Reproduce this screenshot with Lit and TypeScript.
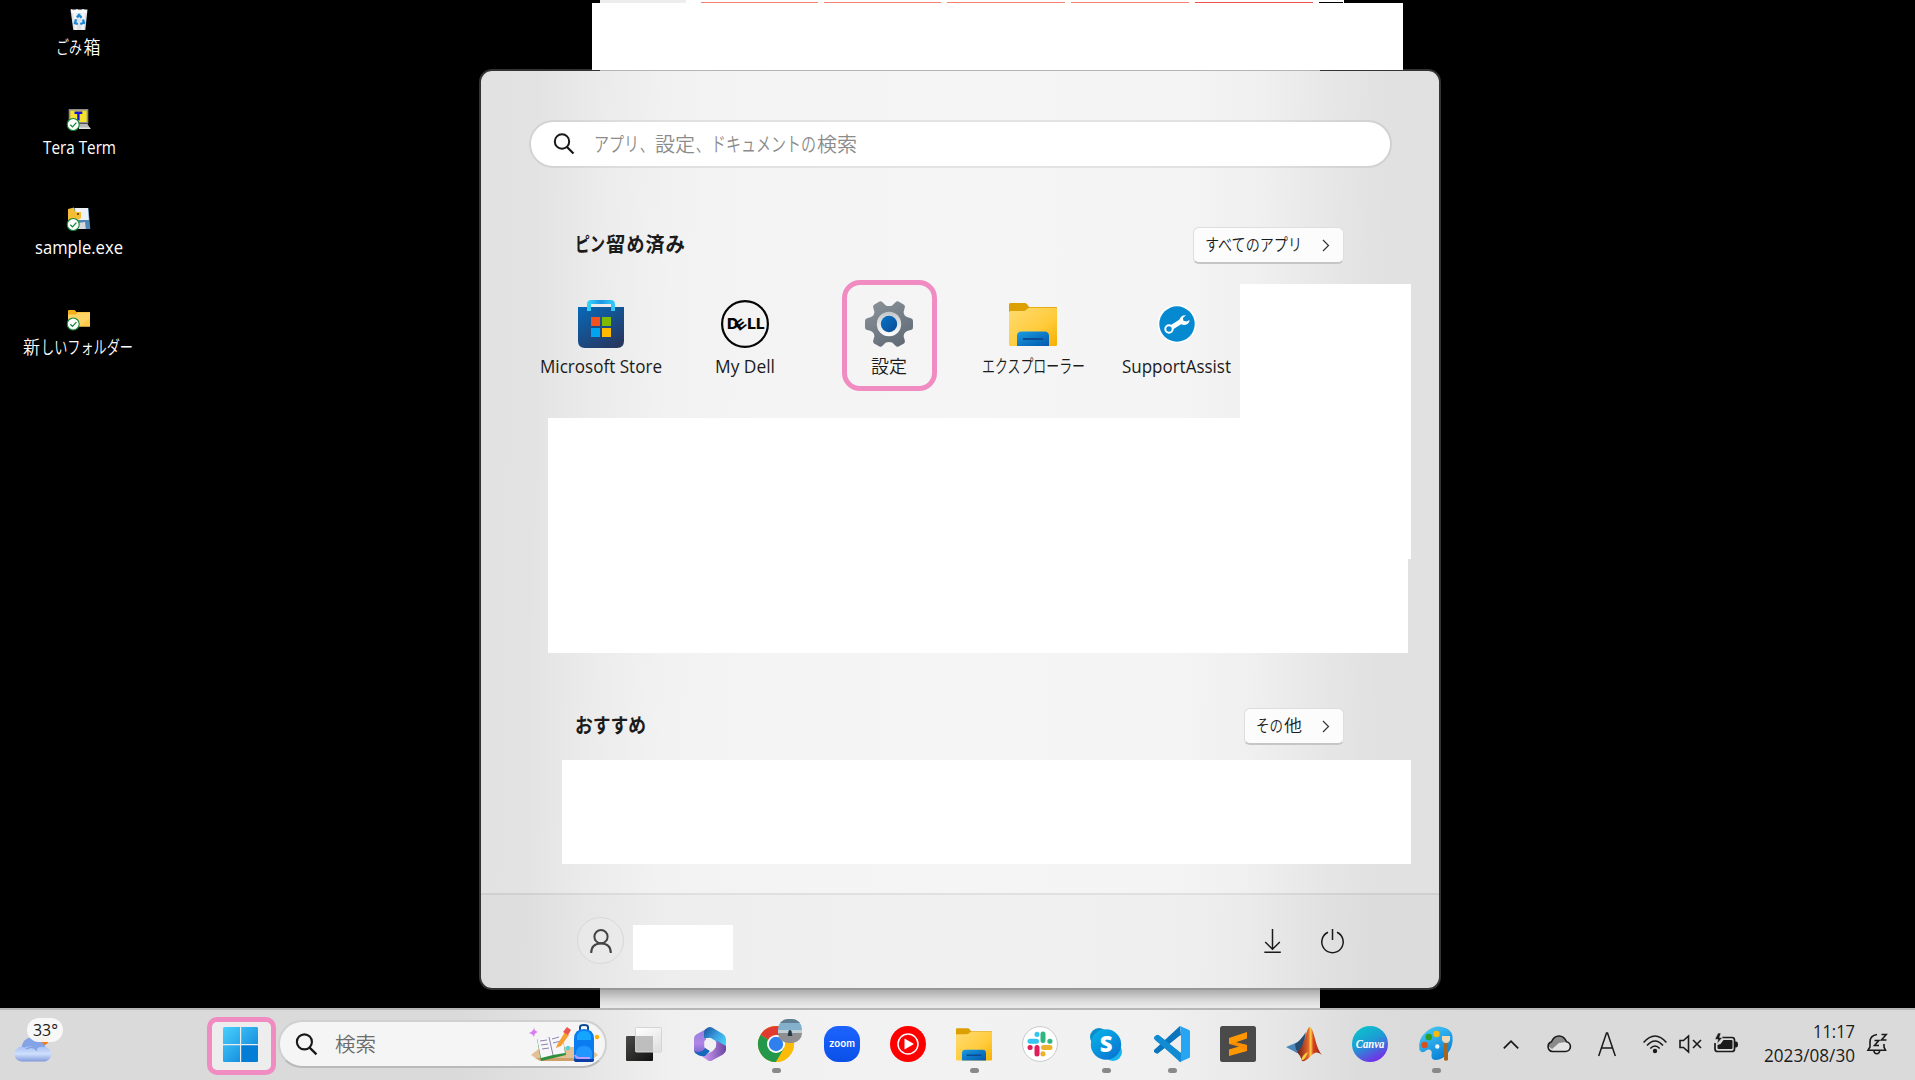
import { LitElement, html, css, svg } from "lit";
import { customElement } from "lit/decorators.js";

type Run = [string, number, number];
const JP = `"Noto Sans CJK JP", sans-serif`;
const UI = `"Open Sans", "Noto Sans", "Noto Sans CJK JP", sans-serif`;

interface LabelOptions {
  w: number;
  h?: number;
  base?: number;
  size?: number;
  fill?: string;
  weight?: number;
  font?: string;
}

/* A line of text whose runs each have a start and an advance width. */
const label = (runs: Run[], o: LabelOptions) => html`
  <svg class="label" width=${o.w} height=${o.h ?? 24} font-size=${o.size ?? 18}
    font-weight=${o.weight ?? (o.font === JP ? 350 : 400)}
    font-family=${o.font ?? UI} fill=${o.fill ?? "#1b1b1b"}>
    ${runs.map(([t, x, w]) => svg`<text x=${x} y=${o.base ?? 18} textLength=${w} lengthAdjust="spacingAndGlyphs">${t}</text>`)}
  </svg>`;

const icon = (w: number, h: number, body: unknown, box = `0 0 ${w} ${h}`) =>
  html`<svg class="icon" width=${w} height=${h} viewBox=${box}>${body}</svg>`;

const synced = (cy: number) => svg`
  <g transform=${`translate(0 ${cy - 16})`}>
    <circle cx="6.200" cy="16" r="6" fill="#fff" stroke="#16853a" stroke-width="1.100"/>
    <path d="M3.300 16.200l2.200 2.200 3.900-4.300" fill="none" stroke="#16853a" stroke-width="1.300"/>
  </g>`;

const recycle = icon(20, 24, svg`
  <path d="M1.500 2.500h17L16.300 23H4.300z" fill="#dfe3e8"/>
  <path d="M2 2l3 2 3-2 3 2 3-2 4 2-.6 2H2.500z" fill="#f8fafc"/>
  <path d="M4 5l2 18h2L7 5zM13 5l-.5 18h2L16 5z" fill="#f3f5f7"/>
  <g fill="none" stroke="#1587d8" stroke-width="2.300">
    <path d="M8 10.500l2-2.500 2.600 2.800"/><path d="M14 12.500l1 3.300-3.700 1.200"/><path d="M8.800 17l-2.800-.8 1-4"/>
  </g>`);

const teraTerm = icon(24, 24, svg`
  <rect x="2.500" y="2.800" width="18" height="13" fill="#f6e22b" stroke="#8d8d8d" stroke-width="1.600"/>
  <path d="M7.500 5.800h7.800M11.400 5.600v8" stroke="#1414d8" stroke-width="2.400"/>
  <path d="M12 17h8.500l3 5H12z" fill="#b9b9b9"/><path d="M12 20.500h11l.6 1.500H12z" fill="#e1e1e1"/>
  ${synced(17.5)}`);

const sampleExe = icon(24, 24, svg`
  <path d="M6 1h15.500l1.800 21H9z" fill="#4b87b8"/>
  <path d="M8 1h13l.9 12H9z" fill="#eef1f5"/><path d="M11 16l7-1 .8 7H11z" fill="#d9d9d9"/>
  <path d="M1 2l6-1.500L8 5h6v6L8 15H1z" fill="#f4bd35"/><circle cx="11" cy="7" r="1.100" fill="#5b3d0a"/>
  ${synced(17.5)}`);

const plainFolder = icon(24, 24, svg`
  <path d="M1 4a1 1 0 0 1 1-1h5.500l2 2H23v5H1z" fill="#f3b01c"/>
  <path d="M1 7.500h8l2-2h12V19.500H1z" fill="#fdd465"/><path d="M12 19.500L23 11v8.500z" fill="#fccb48"/>
  ${synced(17)}`);

const folder = (id: string) => svg`
  <defs>
    <linearGradient id=${id + "a"} x2="1" y2="1"><stop offset="0" stop-color="#ffdb72"/><stop offset=".6" stop-color="#ffcb3a"/><stop offset="1" stop-color="#f5b000"/></linearGradient>
    <linearGradient id=${id + "b"} x2="1" y2="1"><stop offset="0" stop-color="#1b9be0"/><stop offset="1" stop-color="#0258ad"/></linearGradient>
  </defs>
  <path d="M0 4.500a1.500 1.500 0 0 1 1.500-1.500H16c2.500 0 3 4 5 4h26a1 1 0 0 1 1 1V12H0z" fill="#dda003"/>
  <path d="M0 12.500Q0 11 1.500 11H14c4 0 4-3.200 7-3.200h26q1 0 1 1.500v35.200q0 1.500-1.500 1.500h-45Q0 46 0 44.500z" fill=${`url(#${id}a)`}/>
  <path d="M8 46V36q0-4.500 4.500-4.500h23q4.500 0 4.500 4.500v10z" fill=${`url(#${id}b)`}/>
  <path d="M14 39h20" stroke="#0b4a91" stroke-width="2"/>`;

const store = icon(48, 50, svg`
  <defs>
    <linearGradient id="st" x1=".1" x2=".8" y2="1"><stop offset="0" stop-color="#0867b5"/><stop offset="1" stop-color="#27365f"/></linearGradient>
    <linearGradient id="sh" x2="1"><stop offset="0" stop-color="#32d1f7"/><stop offset=".5" stop-color="#1d97e8"/><stop offset="1" stop-color="#32c8f7"/></linearGradient>
  </defs>
  <path d="M1 7h46v34q0 7-7 7H8q-7 0-7-7z" fill="url(#st)"/>
  <path d="M12 11V4.500Q12 2 14 2h20q2 0 2 2.500V11" fill="none" stroke="url(#sh)" stroke-width="4"/>
  <path d="M14 17h9v9h-9z" fill="#f4511e"/><path d="M25 17h9v9h-9z" fill="#7fba00"/>
  <path d="M14 28h9v9h-9z" fill="#00a4ef"/><path d="M25 28h9v9h-9z" fill="#ffb900"/>`);

const dell = icon(48, 48, svg`
  <circle cx="24" cy="24" r="22.900" fill="none" stroke="#050505" stroke-width="2.200"/>
  <g font-family="Inter, sans-serif" font-weight="800" font-size="14.500" fill="#050505">
    <text x="6" y="29.300" textLength="11.500" lengthAdjust="spacingAndGlyphs">D</text>
    <text transform="translate(18.200 31.200) rotate(-38)" x="0" y="0" font-size="12.500" textLength="10.500" lengthAdjust="spacingAndGlyphs">E</text>
    <text x="26.300" y="29.300" textLength="17.500" lengthAdjust="spacingAndGlyphs">LL</text>
  </g>`);

const gear = icon(48, 48, svg`
  <defs>
    <linearGradient id="ge" x2=".6" y2="1"><stop offset="0" stop-color="#8d949b"/><stop offset="1" stop-color="#626d78"/></linearGradient>
    <linearGradient id="gr" x2="0" y2="1"><stop offset="0" stop-color="#c4c7ca"/><stop offset="1" stop-color="#fff"/></linearGradient>
    <linearGradient id="gb" x2="1" y2="1"><stop offset="0" stop-color="#0574c9"/><stop offset="1" stop-color="#0c4a94"/></linearGradient>
  </defs>
  <path d="M14.500 1.500q1.500-.8 3 .7l3.300 3.200q3.200 1.400 6.400 0l3.300-3.200q1.500-1.500 3-.7l5.500 3.200q1.400 1 .8 2.800l-1.200 4.400q.3 3.700 3.500 5.200l4.400 1.300q1.500.5 1.500 2.500v6.300q0 2-1.500 2.500l-4.400 1.300q-3.200 1.500-3.500 5.200l1.200 4.400q.6 1.800-.8 2.800l-5.500 3.100q-1.500.8-3-.7l-3.300-3.200q-3.200-1.400-6.400 0l-3.300 3.200q-1.500 1.500-3 .7L9 43.400q-1.400-1-.8-2.800l1.200-4.400q-.3-3.700-3.500-5.200L1.500 29.700Q0 29.200 0 27.200v-6.300q0-2 1.500-2.500l4.400-1.300q3.200-1.500 3.500-5.200L8.200 7.500Q7.600 5.700 9 4.700z" fill="url(#ge)"/>
  <circle cx="24" cy="24" r="12.200" fill="url(#gr)"/><circle cx="24" cy="24" r="8.200" fill="url(#gb)"/>`);

const support = icon(48, 48, svg`
  <circle cx="24" cy="24" r="19.300" fill="#fff"/><circle cx="24" cy="24" r="17.700" fill="#0589d1"/>
  <path d="M18.500 27.500l11-7" stroke="#fff" stroke-width="5"/>
  <circle cx="16" cy="29" r="3.700" fill="#0589d1" stroke="#fff" stroke-width="2"/>
  <path d="M33 15.200a6 6 0 0 0-6.500 7.500q3.500 4 8 1.300 2.300-1.500 2-4l-2.800 1.600-3.300-.9-.5-2.700z" fill="#fff"/>`);

const magnifier = (n: number) => icon(n, n, svg`
  <circle cx="9" cy="8.500" r="7.200" fill="none" stroke="#181818" stroke-width="2"/>
  <path d="M14 14l6.500 6.500" stroke="#181818" stroke-width="2.200"/>`, "0 0 22 22");

const chevron = icon(8, 13, svg`<path d="M1 1l5.500 5.500L1 12" fill="none" stroke="#333" stroke-width="1.200"/>`);

const windows = icon(36, 36, svg`
  <defs><linearGradient id="wn" gradientUnits="userSpaceOnUse" x2="36" y2="36"><stop offset="0" stop-color="#49d0fb"/><stop offset=".5" stop-color="#27a5ea"/><stop offset="1" stop-color="#0272d0"/></linearGradient></defs>
  <path d="M0 1.500Q0 0 1.500 0H17v17H0zM18.200 0H34q1 0 1 1.500V17H18.200zM0 18.200h17V35H1.500Q0 35 0 34z" fill="url(#wn)"/>
  <path d="M18.200 18.200H35V34q0 1-1 1H18.200z" fill="#037dd6"/>`);

const weather = icon(38, 26, svg`
  <defs><linearGradient id="we" x2="0" y2="1"><stop offset="0" stop-color="#a5bff3"/><stop offset=".5" stop-color="#cfdffc"/><stop offset="1" stop-color="#819bdc"/></linearGradient></defs>
  <path d="M22 0h12v3q-1 4-4 5h-8z" fill="#f27a1c"/>
  <circle cx="17.500" cy="11" r="10.800" fill="#83a3e6"/><circle cx="25" cy="11" r="5.500" fill="#83a3e6"/>
  <path d="M7 24.500a7.300 7.300 0 1 1 2.500-14q7.500-3 12 1.500 3-3 7.500-2a7.500 7.300 0 0 1 1 14.500z" fill="url(#we)"/>
  <path d="M11 12q7-4 11 1.500" fill="none" stroke="#7f9ee4" stroke-width="1.300"/>`);

const backpack = icon(72, 40, svg`
  <path d="M3 31l10-8h48l9 8-8 6H12z" fill="#e3c196"/><path d="M7 34h59l-5 3H13z" fill="#cfa06b"/>
  <path d="M6 3q0 4 4 5-4 1-4 5-1-3-5-4 5-2 5-6z" fill="#dc7cf5"/>
  <path d="M9 15l25-3 4 19-25 6z" fill="#2f8f3f"/><path d="M9 14l12-1 13-3 3 19-12 2-12 3z" fill="#f7f6fb"/>
  <path d="M21 13l4 18M12 17l7-1M13 21l7-1M14 25l7-1M24 15l7-2M25 19l8-2" stroke="#8b84a8" stroke-width="1"/>
  <path d="M29 21l8-13 4 3-8 11-5 2z" fill="#f7a032"/><path d="M35 8l4-5 4 3-3 5z" fill="#ef5350"/>
  <circle cx="40" cy="24" r="2.200" fill="#56cfe1"/><circle cx="69" cy="13" r="2.200" fill="#ffb000"/>
  <path d="M52 6V3q0-2 4-2t4 2v3" fill="none" stroke="#0c4c91" stroke-width="2"/>
  <path d="M46 15Q46 5 56 5t10 10v20q0 3-3 3H49q-3 0-3-3z" fill="#0a7cf0"/>
  <path d="M49 12q1-5 7-5t7 5v4H49z" fill="#14a5ff"/><path d="M48 30q0-8 8-8t8 8v5H48z" fill="#2196ff"/>
  <path d="M47 31q1 3 4 3h11" stroke="#c69bff" stroke-width="2" fill="none"/><path d="M46 35h20v1q0 2-3 2H49q-3 0-3-2z" fill="#0b3fa5"/>`);

const taskView = svg`
  <defs>
    <linearGradient id="tv" x2="1" y2="1"><stop offset="0" stop-color="#4a4a48"/><stop offset="1" stop-color="#111"/></linearGradient>
    <linearGradient id="tw" x2=".6" y2="1"><stop offset="0" stop-color="#fff"/><stop offset="1" stop-color="#e2e2e2"/></linearGradient>
  </defs>
  <rect x="0" y="10" width="27" height="25" rx="1" fill="url(#tv)"/>
  <rect x="9.500" y="1.500" width="26" height="24.500" rx="1" fill="url(#tw)" stroke="#d4d4d4"/>
  <path d="M9.500 10h17.500v15.500H9.500z" fill="#bebebe"/>`;

const m365 = svg`
  <defs>
    <linearGradient id="m1" x2="0" y2="1"><stop offset="0" stop-color="#8a80de"/><stop offset=".6" stop-color="#b184e6"/><stop offset="1" stop-color="#6a62c9"/></linearGradient>
    <linearGradient id="m2" x2="1" y2=".9"><stop offset="0" stop-color="#1a4f9c"/><stop offset=".5" stop-color="#3a9fe0"/><stop offset="1" stop-color="#49dcff"/></linearGradient>
    <linearGradient id="m3" x2="1" y2="0"><stop offset="0" stop-color="#d6a2fa"/><stop offset="1" stop-color="#69459f"/></linearGradient>
  </defs>
  <path d="M18 1L5 8Q2 9.500 2 13v11q0 3 3 4l5 1 4-5V12L13 9V4z" fill="url(#m1)"/>
  <path d="M13 3.500L16 1.500q2-1 4 0l11 6.500q3 2 3 5v10l-12-8-4-3h-6V6z" fill="url(#m2)"/>
  <path d="M34 20v4q0 2.500-3 4.500l-11 6q-2 1-4 0l-6-4 8-4q5-2 6-7l.5-5z" fill="url(#m3)"/>
  <path d="M2.500 25q6 3 11-3l4.500 3-5 5q-3 1-7-1-3-1.500-3.500-4z" fill="#1767ba"/>
  <path d="M18 12.500l5 2.800v5.600l-5 3-5-3v-5.600z" fill="#f1f1f1" stroke="#f1f1f1" stroke-width="1.500" stroke-linejoin="round"/>`;

const chrome = svg`
  <defs><clipPath id="pc"><rect x="20" y="-7" width="24" height="24" rx="10"/></clipPath></defs>
  <circle cx="18" cy="18" r="18" fill="#fbbc09"/>
  <path d="M18 18L2.400 9A18 18 0 0 1 33.600 9z" fill="#e13b30"/>
  <path d="M18 18L2.400 9A18 18 0 0 0 18 36l8-13.500z" fill="#23984a"/>
  <path d="M18 9h15.600A18 18 0 0 1 18 36l8-13.500z" fill="#fbbc09"/>
  <circle cx="18" cy="18" r="9" fill="#fff"/><circle cx="18" cy="18" r="7.200" fill="#2f80ed"/>
  <g clip-path="url(#pc)"><path d="M20-7h24V8H20z" fill="#83b1cc"/><path d="M20-7h24v4H20z" fill="#5f7f91"/><path d="M20 4h24v3H20z" fill="#bdd0d8"/><path d="M20 7h24v10H20z" fill="#8f8f91"/><path d="M30.500 5q1.500-2 3 0l.8 5h-4.600z" fill="#253947"/></g>`;

const zoomIcon = svg`
  <defs><linearGradient id="zm" x2="0" y2="1"><stop offset="0" stop-color="#1d63ff"/><stop offset="1" stop-color="#0950e8"/></linearGradient></defs>
  <rect width="36" height="36" rx="14.500" fill="url(#zm)"/>
  <text x="5" y="21" font-family="Inter, sans-serif" font-size="10" font-weight="600" fill="#fff" textLength="26" lengthAdjust="spacingAndGlyphs">zoom</text>`;

const music = svg`
  <circle cx="18" cy="18" r="18" fill="#fe0000"/><circle cx="18" cy="18" r="10" fill="none" stroke="#fff" stroke-width="1.500"/>
  <path d="M14.500 12.500L24 18l-9.500 5.500z" fill="#fff"/>`;

const slack = svg`
  <circle cx="18" cy="18" r="17.400" fill="#fff" stroke="#c9c9c9" stroke-width="1"/>
  <g stroke-width="5" stroke-linecap="round">
    <path d="M8 15.300h6.500M15 8.300v.1" stroke="#36c5f0"/><path d="M21 8v6.500M28 15.300h-.2" stroke="#2eb67d"/>
    <path d="M28 21.500h-6.500M21 28v-.2" stroke="#ecb22e"/><path d="M15 28v-6.500M8 21.500h.2" stroke="#e01e5a"/>
  </g>`;

const skype = svg`
  <defs><linearGradient id="sk" x2=".8" y2="1"><stop offset="0" stop-color="#08b6ea"/><stop offset="1" stop-color="#0874d1"/></linearGradient></defs>
  <circle cx="11" cy="11" r="9" fill="#0a8fca"/><circle cx="25" cy="26" r="9" fill="#18b5ed"/><circle cx="18" cy="18.500" r="15.200" fill="url(#sk)"/>
  <text x="18" y="26.300" text-anchor="middle" font-family="Open Sans, sans-serif" font-size="22" font-weight="800" fill="#fff">S</text>`;

const vscode = svg`
  <path d="M26 0L0 24v2l2.500 1.500q1 .5 2-.4L27 9z" fill="#0a74bd"/>
  <path d="M26 36L0 12l2.500-2.800q1-.8 2.300 0L27 27z" fill="#118bd2"/>
  <path d="M26 0l9 4q1 .5 1 1.500v25q0 1-1 1.500l-9 4q-1-.5-1.500-1.500L27 30V6z" fill="#27a4f2"/>
  <path d="M26 9.500L15.500 18 26 26.500z" fill="#efefef"/><path d="M0 12q0-1 1-2l2-1q1-.3 2 .5L27 27v9L1 14q-1-1-1-2z" fill="#118bd2"/>`;

const sublime = svg`
  <rect width="36" height="36" rx="2.500" fill="#4a4a4a"/>
  <path d="M9 12l18-6v6.500l-11 3.700L27 19v6L9 30v-6.500l10-3L9 17.700z" fill="#ff9800"/><path d="M9 18l10 3 8 4v-6l-11-3z" fill="#f57c00" opacity=".4"/>`;

const matlab = svg`
  <defs><linearGradient id="ml" x2="1"><stop offset="0" stop-color="#6b1c15"/><stop offset=".45" stop-color="#e2632a"/><stop offset=".55" stop-color="#ffcf4a"/><stop offset=".65" stop-color="#d8431e"/><stop offset="1" stop-color="#8b1c12"/></linearGradient></defs>
  <path d="M0 21l12-5q4-1 8-8l-3 18-6 1z" fill="#4a86b8"/><path d="M9 18q5-3 11-12l-5 20-5-2z" fill="#264c72"/>
  <path d="M11 26q5-4 8-14 3-12 5-11 2 0 5 12t7 16q-6-6-12 2-5 5-8 4-1-5-5-9z" fill="url(#ml)"/>
  <path d="M15 34q2-6 7-8-2 6-5 8z" fill="#ffcc3e"/>`;

const canva = svg`
  <defs><linearGradient id="ca" x1=".2" x2=".7" y2="1"><stop offset="0" stop-color="#09c5c9"/><stop offset=".45" stop-color="#1e9bd5"/><stop offset="1" stop-color="#7a26e8"/></linearGradient></defs>
  <circle cx="18" cy="18" r="18" fill="url(#ca)"/>
  <text x="3.800" y="21.500" font-family="Liberation Serif, serif" font-style="italic" font-weight="700" font-size="12" fill="#fff" textLength="28.500" lengthAdjust="spacingAndGlyphs">Canva</text>`;

const paint = svg`
  <defs><linearGradient id="pa" x2=".6" y2="1"><stop offset="0" stop-color="#4dd2f7"/><stop offset="1" stop-color="#0880d8"/></linearGradient></defs>
  <path d="M1.500 24Q-.5 13 8 6t16-5q9 1.500 10.500 9 1 10-4.500 17-6 7.500-13 7-4-.5-3.500-5 1-5-2.500-5.500-2-.3-3.500 1.500-3.500 3-6-1z" fill="url(#pa)"/>
  <circle cx="6.500" cy="19" r="3.200" fill="#d84f20"/><circle cx="10.700" cy="11" r="3.200" fill="#2d9d24"/><circle cx="18.500" cy="8" r="3.200" fill="#fab90d"/><circle cx="19.300" cy="20.500" r="2.200" fill="#e9f6fc"/>
  <path d="M26 17h4v17q-2 1.500-4 0z" fill="#a5671f"/><path d="M24 10h8v4q-1 3-4 3t-4-3z" fill="#eed8b5"/>`;

const apps: { body: unknown; box?: string; running?: boolean }[] = [
  { body: taskView }, { body: m365 }, { body: chrome, running: true }, { body: zoomIcon }, { body: music },
  { body: folder("tf"), box: "0 0 48 48", running: true }, { body: slack }, { body: skype, running: true },
  { body: vscode, running: true }, { body: sublime }, { body: matlab }, { body: canva }, { body: paint, running: true },
];

@customElement("desktop-icons")
class DesktopIcons extends LitElement {
  static styles = css`
    :host { display: flex; flex-direction: column; width: 157px; padding-top: 7px; }
    .item { height: 100px; display: flex; flex-direction: column; align-items: center; gap: 3px; }
    svg { display: block; overflow: visible; }
  `;
  render() {
    const o = (w: number, font = UI) => ({ w, base: 20, fill: "#fff", font });
    return html`
      <div class="item">${recycle}${label([["ごみ", 0, 26], ["箱", 27.5, 17]], o(46, JP))}</div>
      <div class="item">${teraTerm}${label([["Tera Term", 0, 73]], o(72))}</div>
      <div class="item">${sampleExe}${label([["sample.exe", 0, 88]], o(88))}</div>
      <div class="item">${plainFolder}${label([["新", 0, 17], ["しいフォルダー", 18, 92]], o(111, JP))}</div>`;
  }
}

@customElement("start-menu")
class StartMenu extends LitElement {
  static styles = css`
    :host {
      display: flex; flex-direction: column; box-sizing: border-box; width: 958px; height: 917px;
      border-radius: 11px; overflow: hidden;
      background: linear-gradient(91deg, #e2e2e2, #e3e3e3 6%, #ebebeb 12%, #f2f2f2 20%, #f4f4f4 32%, #f5f5f5 50%, #f4f4f4 72%, #f0f0f0 80%, #e6e6e6 88%, #e1e1e1 93%, #e1e1e1);
    }
    svg { display: block; overflow: visible; flex: none; }
    .body { height: 822px; flex: none; display: flex; flex-direction: column; }
    .search {
      display: flex; align-items: center; box-sizing: border-box; width: 863px; height: 48px; margin: 49px 0 0 48px;
      border: 2px solid rgba(0, 0, 0, .07); border-radius: 24px; background: #fff; background-clip: padding-box; padding-left: 22px; gap: 19px;
    }
    .heading { display: flex; justify-content: space-between; align-items: center; height: 37px; padding: 0 95px 0 94px; }
    .pinned-heading { margin-top: 59px; }
    .rec-heading { margin-top: 55px; }
    .btn {
      display: flex; align-items: center; justify-content: space-between; box-sizing: border-box; height: 37px; width: 151px;
      padding: 0 13px 0 11px; border: 1px solid #dedede; border-bottom: 2px solid #c6c6c6; border-radius: 6px; background: #fcfcfc;
    }
    .more { width: 100px; }
    .pins { display: flex; height: 134px; margin: 20px 28px 0 48px; }
    .pin { width: 144px; flex: none; display: flex; flex-direction: column; align-items: center; padding-top: 16px; position: relative; gap: 6px; }
    .mark { position: absolute; box-sizing: border-box; left: 25px; top: -4px; width: 95px; height: 111px; border: 5px solid #f08cc1; border-radius: 18px; }
    .cover { background: #fff; flex: none; }
    .pin-cover { width: 171px; margin-left: -9px; z-index: 1; }
    .grid-upper { height: 141px; margin: 0 28px 0 67px; }
    .grid-lower { height: 94px; margin: 0 31px 0 67px; }
    .rec-cover { height: 104px; margin: 15px 28px 0 81px; }
    .footer {
      flex: 1; display: flex; align-items: center; box-sizing: border-box; border-top: 2px solid rgba(0, 0, 0, .06);
      background: rgba(0, 0, 0, .02); padding: 0 95px 2px 96px;
    }
    .avatar { width: 45px; height: 45px; border: 1px solid #d8d8d8; border-radius: 50%; background: rgba(233, 233, 233, .7); display: flex; align-items: center; justify-content: center; }
    .name-cover { width: 100px; height: 45px; margin: 13px auto 0 9px; }
    .actions { display: flex; gap: 40px; }
  `;
  render() {
    const pin = (ic: unknown, lb: unknown, marked = false) =>
      html`<div class="pin">${ic}${lb}${marked ? html`<div class="mark"></div>` : ""}</div>`;
    return html`
      <div class="body">
        <div class="search">${magnifier(22)}
          ${label([["アプリ", 0, 45], ["、", 46, 13], ["設定", 61, 40], ["、", 102, 13], ["ドキュメントの", 117, 105], ["検索", 223, 40]],
            { w: 263, size: 20, base: 19.5, fill: "#8b8b8b", font: JP })}
        </div>
        <div class="heading pinned-heading">
          ${label([["ピン", 0, 30], ["留", 31, 19.5], ["め", 51.5, 18], ["済", 70.5, 19], ["み", 90.5, 19.5]], { w: 110, size: 20, base: 18, weight: 600, font: JP })}
          <div class="btn">${label([["すべてのアプリ", 0, 97]], { w: 97, size: 17, base: 17.5, font: JP })}${chevron}</div>
        </div>
        <div class="pins">
          ${pin(store, label([["Microsoft Store", 0, 122]], { w: 122, base: 17 }))}
          ${pin(dell, label([["My Dell", 0, 60]], { w: 60, base: 19 }))}
          ${pin(gear, label([["設定", 0, 36]], { w: 36, base: 18.5, font: JP }), true)}
          ${pin(icon(48, 48, folder("ef")), label([["エクスプローラー", 0, 103]], { w: 103, base: 18.5, font: JP }))}
          ${pin(support, label([["SupportAssist", 0, 109]], { w: 110, base: 19 }))}
          <div class="cover pin-cover"></div>
        </div>
        <div class="cover grid-upper"></div>
        <div class="cover grid-lower"></div>
        <div class="heading rec-heading">
          ${label([["おすすめ", 0, 71]], { w: 71, size: 20, base: 18, weight: 600, font: JP })}
          <div class="btn more">${label([["その", 0, 27], ["他", 28, 18]], { w: 46, size: 17, base: 17.5, font: JP })}${chevron}</div>
        </div>
        <div class="cover rec-cover"></div>
      </div>
      <div class="footer">
        <div class="avatar">${icon(22, 24, svg`<g fill="none" stroke="#444" stroke-width="2"><circle cx="11" cy="7.700" r="6.600"/><path d="M1.200 24q0-9.500 9.800-9.500t9.800 9.500"/></g>`)}</div>
        <div class="cover name-cover"></div>
        <div class="actions">
          ${icon(17, 24, svg`<path d="M8.500 0v20M1.200 13l7.300 7.200L15.800 13M.3 23.200h16.500" fill="none" stroke="#1a1a1a" stroke-width="1.500"/>`)}
          ${icon(23, 24, svg`<path d="M11.500 0v11M7 3.300a10.700 10.700 0 1 0 9 0" fill="none" stroke="#1a1a1a" stroke-width="1.500"/>`)}
        </div>
      </div>`;
  }
}

@customElement("task-bar")
class TaskBar extends LitElement {
  static styles = css`
    :host {
      display: flex; box-sizing: border-box; height: 72px; border-top: 2px solid #b6b6b6; position: relative;
      background: linear-gradient(90deg, #dadada, #dadada 24%, #e4e4e4 30%, #f0f0f0 35%, #f2f2f2 45%, #f1f1f1 60%, #e8e8e8 66%, #dcdcdc 71%, #dadada 76%, #dadada);
    }
    svg { display: block; overflow: visible; flex: none; }
    .weather { width: 207px; padding: 27px 0 0 15px; box-sizing: border-box; position: relative; }
    .temp { position: absolute; left: 27px; top: 8px; width: 36px; height: 24px; border-radius: 12px; background: rgba(250, 250, 250, .93); display: flex; justify-content: center; }
    .start { width: 69px; height: 58px; margin-top: 7px; box-sizing: border-box; border: 5px solid #f08cc1; border-radius: 10px; background: #ededed; padding: 5px 0 0 11px; }
    .search { box-sizing: border-box; width: 329px; height: 48px; margin: 10px 0 0 2px; border: 2px solid #d0d0d0; border-bottom-color: #b9b9b9; border-radius: 24px; background: #f5f5f5; display: flex; align-items: center; padding: 0 5px 0 15px; }
    .search .label { margin-left: 17px; margin-right: auto; }
    .apps { display: flex; margin-left: 4px; }
    .app { width: 66px; height: 70px; display: flex; flex-direction: column; align-items: center; padding-top: 16px; box-sizing: border-box; gap: 6px; }
    .run { width: 9px; height: 5px; border-radius: 2.5px; background: #898989; }
    .tray { display: flex; align-items: center; flex: 1; margin-left: 34px; padding-bottom: 2px; }
    .clock { width: 91px; margin: 2px 12px 0 26px; display: flex; flex-direction: column; align-items: flex-end; }
    .gap-a { margin-left: 28px; } .gap-b { margin-left: 27px; } .gap-c { margin-left: 12px; }
  `;
  render() {
    return html`
      <div class="weather">${weather}<div class="temp">${label([["33°", 0, 25]], { w: 25, base: 18, size: 17 })}</div></div>
      <div class="start">${windows}</div>
      <div class="search">${magnifier(23)}${label([["検索", 0, 41]], { w: 41, size: 20, base: 20, fill: "#6c6c6c", font: JP })}${backpack}</div>
      <div class="apps">
        ${apps.map((a) => html`<div class="app">${icon(36, 36, a.body, a.box)}${a.running ? html`<div class="run"></div>` : ""}</div>`)}
      </div>
      <div class="tray">
        ${icon(16, 9, svg`<path d="M.8 8.300L8 1.200l7.200 7.100" fill="none" stroke="#1a1a1a" stroke-width="1.800"/>`)}
        <span class="gap-a">${icon(24, 18, svg`
          <path d="M5.500 16.500a5 5 0 0 1-1-9.500Q7 1 12 1t7.500 6a4.900 4.900 0 0 1-1 9.500z" fill="#e4e4e4"/>
          <path d="M1 11q1-4 4-4.500Q7 1 12 1t7 6l-7 1-7 6z" fill="#8b8b8b"/>
          <path d="M5.500 16.500a5 5 0 0 1-1-9.700Q7 1 12 1t7.500 5.800a4.900 4.900 0 0 1-1 9.700z" fill="none" stroke="#1a1a1a" stroke-width="1.600"/>`)}</span>
        <span class="gap-b">${icon(18, 24, svg`<path d="M.7 24L8.500 1h1l7.800 23M3.500 16h11" fill="none" stroke="#1a1a1a" stroke-width="1.500"/>`)}</span>
        <span class="gap-b">${icon(24, 18, svg`<g fill="none" stroke="#1a1a1a" stroke-width="1.600"><path d="M.6 7.500q11.400-13 22.800 0"/><path d="M4 10.500q8-9 16 0"/><path d="M7.300 13.500q4.700-5 9.400 0"/></g><circle cx="12" cy="16" r="2.200" fill="#1a1a1a"/>`)}</span>
        <span class="gap-c">${icon(23, 18, svg`<path d="M1 5.500h3.500L9.500 1v16l-5-4.500H1zM14 5l8 8M22 5l-8 8" fill="none" stroke="#1a1a1a" stroke-width="1.600"/>`)}</span>
        <span class="gap-c">${icon(24, 22, svg`
          <path d="M8 4.500h10q2.500 0 2.500 2.500v9q0 2.500-2.500 2.500H3.500Q1 18.500 1 16v-6" fill="none" stroke="#1a1a1a" stroke-width="1.700"/>
          <path d="M9.500 7h8q1 0 1 1v7q0 1-1 1h-13q-1 0-1-1v-3l3-1z" fill="#1a1a1a"/><path d="M21 8.500h1q2 0 2 3t-2 3h-1z" fill="#1a1a1a"/>
          <path d="M4 0L.8 6.500H4l-1 4.500L8.500 4.500H5.600L7 0z" fill="#1a1a1a" stroke="#dadada" stroke-width=".6"/>`)}</span>
        <div class="clock">
          ${label([["11:17", 0, 42]], { w: 42, base: 17 })}
          ${label([["2023/08/30", 0, 91]], { w: 91, base: 17 })}
        </div>
        ${icon(21, 22, svg`<g fill="none" stroke="#1a1a1a" stroke-width="1.600"><path d="M10 1.500Q3 2.500 3 9v5l-2 3.300h17.500L17 14v-3"/><path d="M6.800 17.500q.5 3.300 3 3.300t3-3.300"/><path d="M7.500 7.500h4.300l-4.300 5h4.500M14.500 1.500h4.700L14.500 7h5"/></g>`)}
      </div>`;
  }
}

@customElement("app-root")
class AppRoot extends LitElement {
  static styles = css`
    :host { display: flex; flex-direction: column; width: 1915px; height: 1080px; background: #000; overflow: hidden; }
    .desktop { height: 1008px; flex: none; position: relative; overflow: hidden; }
    .behind { position: absolute; left: 600px; top: 0; width: 720px; height: 1008px; background: #f0f0f0; }
    .strip { position: absolute; left: 600px; top: 0; width: 744px; height: 3px; display: flex; background: linear-gradient(90deg, #ededed 86px, #fff 86px); }
    .tabs { display: grid; grid-template-columns: 117px 117px 118px 118px 118px 24px; align-items: end; gap: 6px; padding-left: 101px; }
    .tab { height: 1px; background: #fa8072; }
    .tab.active { background: #ef5050; }
    .tab.dark { background: #000; }
    .menu { position: absolute; left: 481px; top: 71px; border-radius: 11px; box-shadow: 0 0 0 2px rgba(128, 128, 128, .4), 0 6px 18px rgba(0, 0, 0, .42); }
    .top-cover { position: absolute; left: 592px; top: 3px; width: 811px; height: 67px; background: #fff; }
  `;
  render() {
    return html`
      <div class="desktop">
        <desktop-icons></desktop-icons>
        <div class="behind"></div>
        <div class="strip"><div class="tabs">
          ${[0, 1, 2, 3].map(() => html`<div class="tab"></div>`)}<div class="tab active"></div><div class="tab dark"></div>
        </div></div>
        <start-menu class="menu"></start-menu>
        <div class="top-cover"></div>
      </div>
      <task-bar></task-bar>`;
  }
}
